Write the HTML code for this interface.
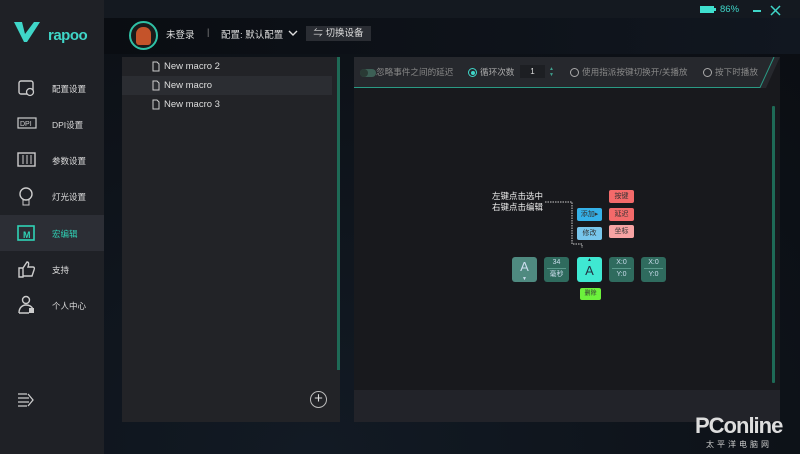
<!DOCTYPE html>
<html><head><meta charset="utf-8"><style>
*{margin:0;padding:0;box-sizing:border-box}
body{width:800px;height:454px;overflow:hidden;background:#0c1017;font-family:"Liberation Sans","Noto Sans CJK SC",sans-serif;color:#ddd;position:relative}
.abs{position:absolute}
.side{left:0;top:0;width:104px;height:454px;background:#1f2126}
.top{left:104px;top:0;width:696px;height:18px;background:#141920}
.hdr{left:104px;top:18px;width:696px;height:36px;background:linear-gradient(90deg,#0a0d12,#111720)}
.nav{left:0;width:104px;height:36px;font-size:8.5px;color:#ddd}
.nav span{position:absolute;left:52px;top:13px}
.nav svg{position:absolute;left:17px;top:8px}
.lp{left:122px;top:57px;width:218px;height:365px;background:#222327}
.row{position:absolute;left:0;width:210px;height:19px;font-size:9.5px;color:#ddd;padding:4px 0 0 42px}
.rp{left:354px;top:57px;width:426px;height:365px;background:#18191d}
.tb{left:354px;top:57px;width:426px;height:31px}
.btn{position:absolute;height:13px;border-radius:2px;font-size:7px;text-align:center;line-height:13px;color:#333}
.blk{position:absolute;width:25px;height:25px;border-radius:3px;background:#2f6b5e;font-size:7px;color:#cde;text-align:center}
.t8{font-size:8.6px}
</style></head><body>
<div class="abs" style="left:104px;top:54px;width:696px;height:400px;background:radial-gradient(ellipse at 30% 100%,#121a24,#0b0e13)"></div>
<div class="abs side"></div>
<div class="abs top"></div>
<div class="abs hdr"></div>
<svg class="abs" style="left:12px;top:20px" width="30" height="26"><path d="M2 2 L10 2 L13 14 L22 2 L28 2 L15 22 L12 22 Z" fill="#3fd6c8"/></svg>
<div class="abs" style="left:48px;top:27px;font-size:15px;color:#3fd6c8;font-weight:bold;letter-spacing:-0.5px">rapoo</div>
<div class="abs nav" style="top:70px"><svg width="20" height="20"><rect x="2" y="3" width="14" height="13" rx="2" fill="none" stroke="#ccc" stroke-width="1.4"/><circle cx="13" cy="14" r="3.5" fill="#1f2126" stroke="#ccc" stroke-width="1.3"/></svg><span>配置设置</span></div>
<div class="abs nav" style="top:106px"><svg width="22" height="20"><rect x="1" y="4" width="18" height="10" fill="none" stroke="#ccc" stroke-width="1.2"/><text x="3" y="12" font-size="7" fill="#ccc" font-family="Liberation Sans">DPI</text></svg><span>DPI设置</span></div>
<div class="abs nav" style="top:142px"><svg width="22" height="20"><rect x="1" y="3" width="17" height="13" fill="none" stroke="#ccc" stroke-width="1.4"/><path d="M6 5v9M10 5v9M14 5v9" stroke="#ccc"/></svg><span>参数设置</span></div>
<div class="abs nav" style="top:178px"><svg width="22" height="22"><circle cx="9" cy="8" r="6" fill="none" stroke="#ccc" stroke-width="1.4"/><rect x="6" y="14" width="6" height="5" fill="none" stroke="#ccc"/></svg><span>灯光设置</span></div>
<div class="abs nav" style="top:215px;background:#2c2e35"><svg width="22" height="22"><rect x="1" y="3" width="16" height="14" fill="none" stroke="#2fd3b6" stroke-width="1.6"/><text x="6" y="15" font-size="9" fill="#2fd3b6" font-weight="bold" font-family="Liberation Sans">M</text></svg><span style="color:#2fd3b6">宏编辑</span></div>
<div class="abs nav" style="top:251px"><svg width="22" height="22"><path d="M2 9h4v9H2zM6 9l4-6c2 0 2 2 1 5h5c1 0 2 1 1 3l-2 6H6" fill="none" stroke="#ccc" stroke-width="1.4"/></svg><span>支持</span></div>
<div class="abs nav" style="top:287px"><svg width="22" height="22"><circle cx="9" cy="5" r="3.5" fill="none" stroke="#ccc" stroke-width="1.4"/><path d="M2 18c0-5 3-8 7-8s6 2 7 4M2 18h10" fill="none" stroke="#ccc" stroke-width="1.4"/><rect x="12" y="13" width="5" height="5" fill="#ccc"/></svg><span>个人中心</span></div>
<svg class="abs" style="left:17px;top:392px" width="20" height="16"><path d="M1 2h9M1 6h11M1 10h11M1 14h9M11 2l5 6-5 6" fill="none" stroke="#ccc" stroke-width="1.3"/></svg>
<div class="abs" style="left:700px;top:6px;width:14px;height:7px;background:#3fe0cf;border:1px solid #3fe0cf"></div>
<div class="abs" style="left:714px;top:8px;width:2px;height:3px;background:#3fe0cf"></div>
<div class="abs" style="left:720px;top:4px;font-size:9.5px;color:#3fd6c8">86%</div>
<div class="abs" style="left:753px;top:10px;width:8px;height:1.5px;background:#3fd6c8"></div>
<svg class="abs" style="left:770px;top:5px" width="11" height="11"><path d="M1 1l9 9M10 1l-9 9" stroke="#3fd6c8" stroke-width="1.5"/></svg>
<div class="abs" style="left:129px;top:21px;width:29px;height:29px;border-radius:50%;border:2px solid #2fc0a5;background:#1a1a1a;overflow:hidden"><div style="margin:4px auto;width:15px;height:18px;border-radius:7px 7px 3px 3px;background:#c4532a"></div></div>
<div class="abs" style="left:166px;top:27px;font-size:9.5px;color:#ddd">未登录</div>
<div class="abs" style="left:207px;top:27px;font-size:9px;color:#888">|</div>
<div class="abs" style="left:221px;top:27px;font-size:9.5px;color:#ddd">配置: 默认配置</div>
<svg class="abs" style="left:288px;top:30px" width="10" height="7"><path d="M1 1l4 4 4-4" fill="none" stroke="#ddd" stroke-width="1.4"/></svg>
<div class="abs" style="left:306px;top:26px;width:65px;height:15px;background:#2a2d33;font-size:9.5px;color:#ddd;line-height:15px;text-align:center">⇋ 切换设备</div>
<div class="abs lp">
<div class="row" style="top:0">New macro 2</div>
<div class="row" style="top:19px;background:#2b2d32">New macro</div>
<div class="row" style="top:38px">New macro 3</div>
<div style="position:absolute;left:215px;top:0;width:3px;height:313px;background:#1e6a56"></div>
<div style="position:absolute;left:188px;top:334px;width:17px;height:17px;border-radius:50%;border:1.3px solid #bbb;color:#ddd;font-size:15px;line-height:14px;text-align:center">+</div>
</div>
<svg class="abs" style="left:152px;top:61px" width="8" height="50"><g fill="none" stroke="#ccc"><path d="M1 1h4l2 2v7H1z"/><path d="M1 20h4l2 2v7H1z"/><path d="M1 39h4l2 2v7H1z"/></g></svg>
<div class="abs rp"></div>
<div class="abs" style="left:354px;top:390px;width:426px;height:32px;background:#222329"></div>
<svg class="abs tb" width="426" height="31"><path d="M0 0H426L412 31H0Z" fill="#26282d"/><path d="M0 30.5H406L420 0" fill="none" stroke="#2a9a84" stroke-width="1"/></svg>
<div class="abs" style="left:360px;top:69px;width:16px;height:8px;border-radius:4px;background:#3c5f55"></div>
<div class="abs" style="left:360px;top:69px;width:8px;height:8px;border-radius:50%;background:#2a3a35"></div>
<div class="abs t8" style="left:376px;top:66px;color:#888;white-space:nowrap">忽略事件之间的延迟</div>
<div class="abs" style="left:468px;top:68px;width:9px;height:9px;border-radius:50%;border:1.2px solid #3fd6c8;padding:1.5px"><div style="width:4px;height:4px;border-radius:50%;background:#3fd6c8"></div></div>
<div class="abs t8" style="left:480px;top:66px;color:#aaa">循环次数</div>
<div class="abs" style="left:520px;top:65px;width:25px;height:13px;background:#1d1f23;font-size:8px;color:#ddd;text-align:center;line-height:13px">1</div>
<div class="abs" style="left:549px;top:66px;font-size:5px;color:#3fa08e;line-height:6px">▲<br>▼</div>
<div class="abs" style="left:570px;top:68px;width:9px;height:9px;border-radius:50%;border:1.2px solid #aaa"></div>
<div class="abs t8" style="left:582px;top:66px;color:#888;white-space:nowrap">使用指派按键切换开/关播放</div>
<div class="abs" style="left:703px;top:68px;width:9px;height:9px;border-radius:50%;border:1.2px solid #aaa"></div>
<div class="abs t8" style="left:715px;top:66px;color:#888">按下时播放</div>
<div class="abs" style="left:772px;top:106px;width:3px;height:277px;background:#1e6a56;border-radius:1px"></div>
<div class="abs" style="left:492px;top:191px;font-size:8.5px;color:#eee;line-height:11px">左键点击选中<br>右键点击编辑</div>
<svg class="abs" style="left:540px;top:200px" width="50" height="50"><path d="M5 2H32V44H42V48" fill="none" stroke="#ccc" stroke-dasharray="1.5 1"/></svg>
<div class="btn" style="left:577px;top:208px;width:25px;background:#35b1e8">添加▸</div>
<div class="btn" style="left:577px;top:227px;width:25px;background:#78c6ec">修改</div>
<div class="btn" style="left:609px;top:190px;width:25px;background:#f36a6a">按键</div>
<div class="btn" style="left:609px;top:208px;width:25px;background:#f36a6a">延迟</div>
<div class="btn" style="left:609px;top:225px;width:25px;background:#f7a3a3">坐标</div>
<div class="blk" style="left:512px;top:257px;background:#4f8a80;font-size:13px;line-height:20px">A<div style="font-size:5px;line-height:4px">▼</div></div>
<div class="blk" style="left:544px;top:257px;line-height:11px">34<div style="border-top:1px solid #5a9a8c;margin:0 3px">毫秒</div></div>
<div class="blk" style="left:577px;top:257px;background:#3fe8d2;color:#234;font-size:13px;line-height:16px"><div style="font-size:5px;line-height:6px">▲</div>A</div>
<div class="blk" style="left:609px;top:257px;line-height:11px">X:0<div style="border-top:1px solid #5a9a8c;margin:0 3px">Y:0</div></div>
<div class="blk" style="left:641px;top:257px;line-height:11px">X:0<div style="border-top:1px solid #5a9a8c;margin:0 3px">Y:0</div></div>
<div class="btn" style="left:580px;top:288px;width:21px;height:12px;line-height:12px;background:#6cf23c;font-size:6px">删除</div>
<div class="abs" style="left:695px;top:413px;font-size:22px;color:#ddd;font-weight:bold;letter-spacing:-1px">PConline</div>
<div class="abs" style="left:706px;top:439px;font-size:8px;color:#ccc;letter-spacing:3px">太平洋电脑网</div>
</body></html>
